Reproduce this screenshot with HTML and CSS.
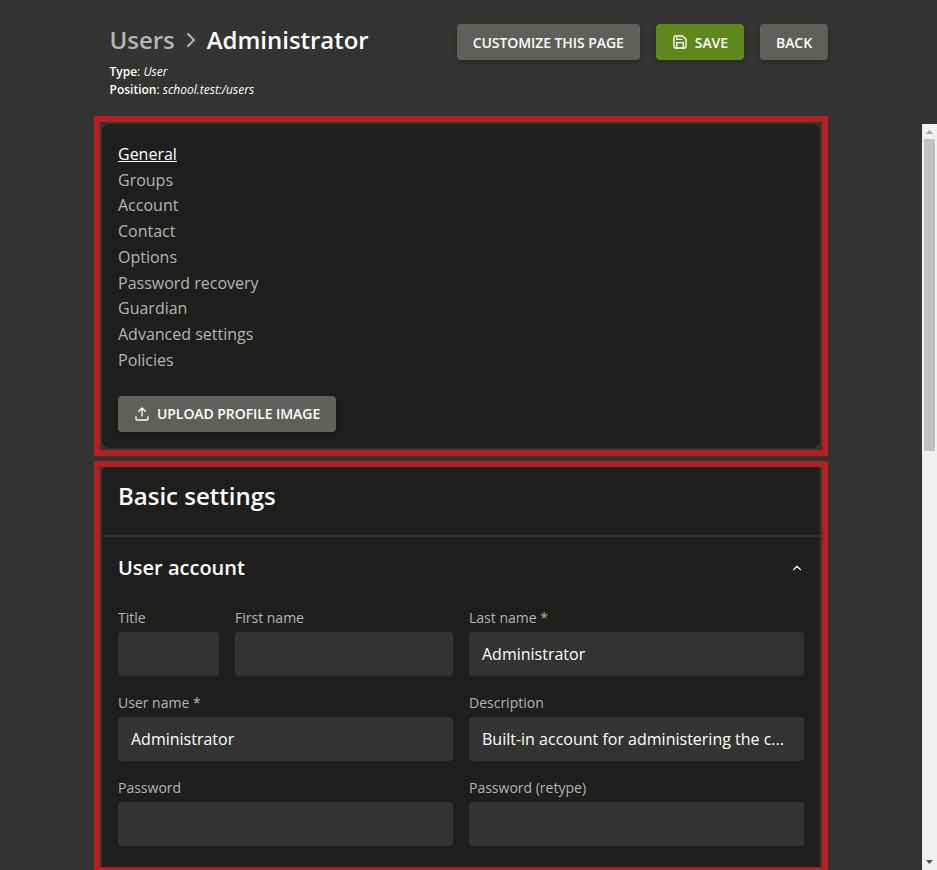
FILE: index.html
```html
<!DOCTYPE html>
<html lang="en">
<head>
<meta charset="utf-8">
<title>Users - Administrator</title>
<link rel="stylesheet" href="styles.css">
</head>
<body>
<header class="header">
  <div class="heading">
    <h1 class="crumbs"><span class="crumb">Users</span><svg class="crumb-sep" viewBox="0 0 24 24"><path d="m9 18 6-6-6-6"/></svg><span>Administrator</span></h1>
    <p class="meta"><b>Type</b>: <i>User</i></p>
    <p class="meta"><b>Position</b>: <i>school.test:/users</i></p>
  </div>
  <div class="actions">
    <button class="btn">CUSTOMIZE THIS PAGE</button>
    <button class="btn btn-primary"><svg class="icon" viewBox="0 0 24 24"><path d="M19 21H5a2 2 0 0 1-2-2V5a2 2 0 0 1 2-2h11l5 5v11a2 2 0 0 1-2 2z"/><path d="M17 21v-8H7v8M7 3v5h8"/></svg>SAVE</button>
    <button class="btn">BACK</button>
  </div>
</header>
<div class="body">
  <main class="content">
    <section class="frame frame-nav">
      <div class="card">
        <nav class="nav">
          <a class="active">General</a>
          <a>Groups</a>
          <a>Account</a>
          <a>Contact</a>
          <a>Options</a>
          <a>Password recovery</a>
          <a>Guardian</a>
          <a>Advanced settings</a>
          <a>Policies</a>
        </nav>
        <button class="btn btn-upload"><svg class="icon" viewBox="0 0 24 24"><path d="M3 16v3a2 2 0 0 0 2 2h14a2 2 0 0 0 2-2v-3M17 8l-5-5-5 5M12 3v12"/></svg>UPLOAD PROFILE IMAGE</button>
      </div>
    </section>
    <section class="frame frame-form">
      <div class="panel">
        <h2 class="panel-title">Basic settings</h2>
        <div class="group-head"><h3>User account</h3><svg class="caret" viewBox="0 0 24 24"><path d="m6 15 6-6 6 6"/></svg></div>
        <form class="fields">
          <label class="field w2">Title<span class="input"></span></label>
          <label class="field w4">First name<span class="input"></span></label>
          <label class="field w6">Last name *<span class="input">Administrator</span></label>
          <label class="field w6">User name *<span class="input">Administrator</span></label>
          <label class="field w6">Description<span class="input">Built-in account for administering the c...</span></label>
          <label class="field w6">Password<span class="input"></span></label>
          <label class="field w6">Password (retype)<span class="input"></span></label>
        </form>
      </div>
    </section>
  </main>
  <div class="scrollbar">
    <svg class="arrow arrow-up" viewBox="0 0 15 15"><path d="M4 10h7L7.500 6z"/></svg>
    <div class="thumb"></div>
    <svg class="arrow arrow-down" viewBox="0 0 15 15"><path d="M4 5h7L7.500 9z"/></svg>
  </div>
</div>
</body>
</html>
```
FILE: styles.css
```css
* { box-sizing: border-box; }
body {
  margin: 0;
  width: 937px;
  height: 870px;
  overflow: hidden;
  display: flex;
  flex-direction: column;
  background: #333331;
  color: #fff;
  font: 16px "Open Sans", sans-serif;
}
h1, h2, h3, p { margin: 0; font-weight: 600; }
svg { fill: none; stroke: currentColor; stroke-width: 2; stroke-linecap: round; stroke-linejoin: round; flex: none; }
.header {
  flex: none;
  height: 116px;
  padding: 24px 109px 0 109.500px;
  display: flex;
  justify-content: space-between;
  align-items: flex-start;
}
.crumbs { display: flex; align-items: center; height: 33px; margin: -1px 0 7px; font-size: 24px; line-height: 33px; letter-spacing: -0.03px; }
.crumb { color: #b5b5b3; }
.crumb-sep { width: 24px; height: 24px; margin: 0 4px; color: #b5b5b3; }
.meta { font-size: 12px; line-height: 18px; font-weight: 400; }
.meta b { font-weight: 600; }
.actions { display: flex; gap: 16px; }
.btn {
  display: inline-flex;
  align-items: center;
  height: 36px;
  padding: 1px 16px 0;
  border: 0;
  border-radius: 4px;
  background: #5f5f5b;
  color: #fff;
  font: 600 14px "Open Sans", sans-serif;
  letter-spacing: -0.07px;
  box-shadow: 0 2px 5px rgba(0, 0, 0, 0.25);
  white-space: nowrap;
}
.btn-primary { background: #5e881d; }
.btn-upload { padding: 0 16px 2px; }
.icon { width: 16px; height: 16px; margin: -1px 7px 0 0; }
.btn-upload .icon { margin-top: 2px; }
.body { display: flex; justify-content: space-between; flex: none; height: 754px; }
.content { width: 734px; margin-left: 94px; }
.frame { border: 6px solid #b41f1f; overflow: hidden; }
.frame-nav { height: 340px; padding: 2px; margin-bottom: 5px; }
.frame-form { height: 412px; padding: 0 2px; }
.card { height: 324px; border-radius: 8px; background: #1e1e1d; padding: 17.800px 16px 16px; display: flex; flex-direction: column; align-items: flex-start; justify-content: space-between; }
.nav { display: flex; flex-direction: column; line-height: 25.750px; color: #b5b5b3; }
.nav .active { color: #fff; text-decoration: underline; }
.panel { height: 412px; margin-top: -2px; border-radius: 8px 8px 0 0; background: #1e1e1d; }
.panel-title { height: 72px; padding: 14px 16px 0; border-bottom: 2px solid #333331; font-size: 24px; line-height: 33px; }
.group-head { display: flex; align-items: center; justify-content: space-between; height: 62px; padding: 0 16px; }
.group-head h3 { font-size: 20px; line-height: 28px; }
.caret { width: 14px; height: 14px; }
.fields { display: grid; grid-template-columns: repeat(12, 1fr); column-gap: 16px; row-gap: 17px; padding: 9px 16px 0; }
.field { display: flex; flex-direction: column; height: 68px; font-size: 14px; line-height: 20px; color: #b5b5b3; justify-content: space-between; min-width: 0; }
.w2 { grid-column: span 2; }
.w4 { grid-column: span 4; }
.w6 { grid-column: span 6; }
.input { height: 44px; border-radius: 4px; background: #333331; padding: 0 13px; color: #fff; font-size: 16px; line-height: 44px; white-space: nowrap; }
.scrollbar { width: 15px; height: 746px; margin-top: 8px; background: #f1f1f1; display: flex; flex-direction: column; }
.thumb { height: 312px; margin: 0 2px; background: #c1c1c1; }
.arrow { width: 15px; height: 15px; stroke: none; fill: #a3a3a3; }
.arrow-down { margin-top: auto; fill: #505050; }
```
